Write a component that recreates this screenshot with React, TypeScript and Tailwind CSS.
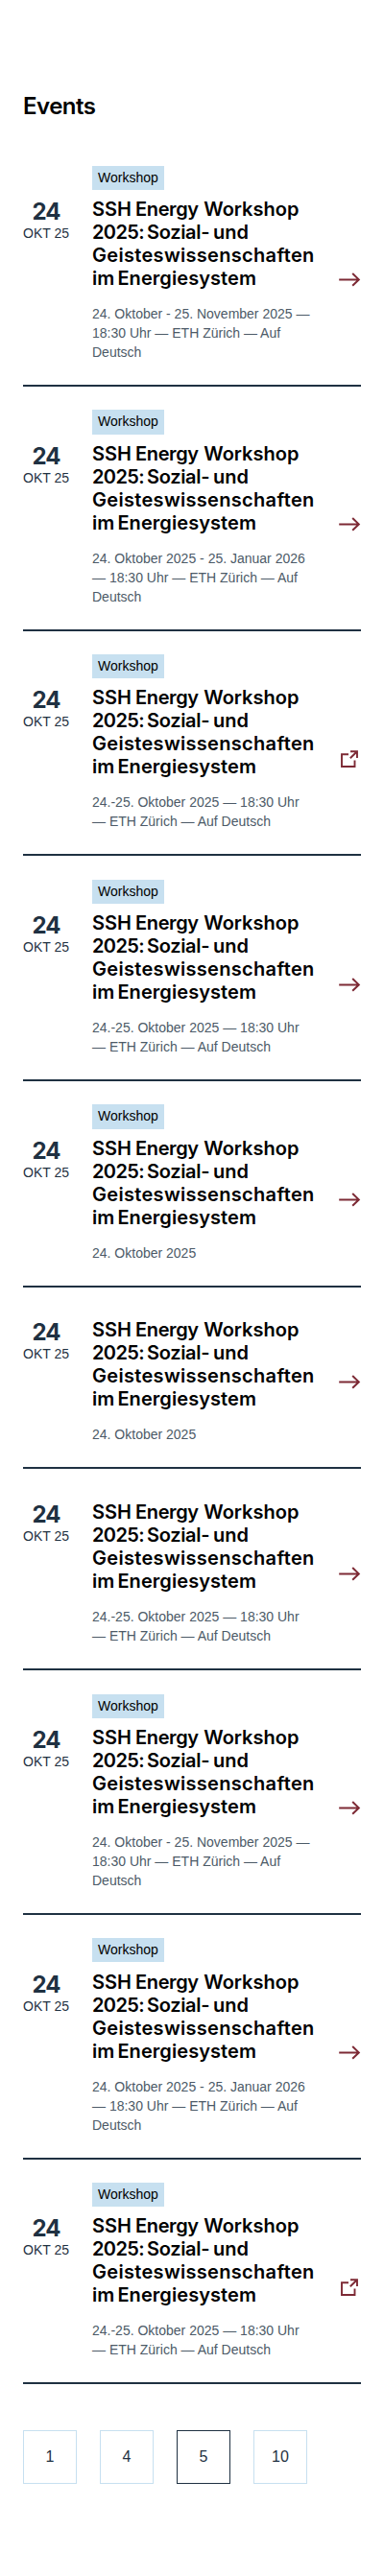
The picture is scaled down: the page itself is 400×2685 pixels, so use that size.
const TITLE_LINES = [
  [
    { word: 'SSH', className: '' },
    { word: 'Energy', className: '-ml-[0.9px] tracking-[-0.4px]' },
    { word: 'Workshop', className: 'ml-[0.6px]' },
  ],
  [
    { word: '2025:', className: 'tracking-[-0.6px]' },
    { word: 'Sozial-', className: '-ml-[2.2px] tracking-[-0.3px]' },
    { word: 'und', className: '-ml-[1.3px]' },
  ],
  [{ word: 'Geisteswissenschaften', className: 'tracking-[0.31px]' }],
  [
    { word: 'im', className: '' },
    { word: 'Energiesystem', className: '-ml-[1.9px] tracking-[0.07px]' },
  ],
];

type EventItem = { tag?: string; meta: string[]; external?: boolean };

const LONG = ['24. Oktober - 25. November 2025 —', '18:30 Uhr — ETH Zürich — Auf', 'Deutsch'];
const LONG_NEXT_YEAR = ['24. Oktober 2025 - 25. Januar 2026', '— 18:30 Uhr — ETH Zürich — Auf', 'Deutsch'];
const SHORT = ['24.-25. Oktober 2025 — 18:30 Uhr', '— ETH Zürich — Auf Deutsch'];
const DAY = ['24. Oktober 2025'];

const EVENTS: EventItem[] = [
  { tag: 'Workshop', meta: LONG },
  { tag: 'Workshop', meta: LONG_NEXT_YEAR },
  { tag: 'Workshop', meta: SHORT, external: true },
  { tag: 'Workshop', meta: SHORT },
  { tag: 'Workshop', meta: DAY },
  { meta: DAY },
  { meta: SHORT },
  { tag: 'Workshop', meta: LONG },
  { tag: 'Workshop', meta: LONG_NEXT_YEAR },
  { tag: 'Workshop', meta: SHORT, external: true },
];

const PAGES = [{ n: 1 }, { n: 4 }, { n: 5, active: true }, { n: 10 }];

function ArrowIcon() {
  return (
    <svg className="size-6 shrink-0" viewBox="0 0 24 24" fill="none" stroke="#7d2a35" strokeWidth="2">
      <path d="M1.2 12.4H22.2M15.2 6L21.8 12.4L15.2 18.8" />
    </svg>
  );
}

function ExternalIcon() {
  return (
    <svg className="size-6 shrink-0" viewBox="0 0 24 24" fill="none" stroke="#7d2a35" strokeWidth="1.9">
      <path d="M11 7.2H4V20H17.5V13.5M13 4.2H20V11M20 4.2L12.8 11.2" />
    </svg>
  );
}

function EventRow({ tag, meta, external }: EventItem) {
  return (
    <li className="border-b-2 border-[#1f3142] pt-[24.3px] pb-6">
      {tag ? (
        <div className="mb-[8.1px] flex pl-[72px]">
          <span className="bg-[#c7e0f0] px-1.5 py-1 text-sm leading-[17.3px] text-black">{tag}</span>
        </div>
      ) : (
        <div className="h-[8.45px]" />
      )}
      <div className="flex items-center gap-6">
        <div className="w-12 shrink-0 self-start text-center text-[#1f3142]">
          <div className="pt-[3px] font-[Inter] text-2xl font-bold leading-6 tracking-[-1px]">24</div>
          <div className="whitespace-nowrap text-sm leading-5">OKT 25</div>
        </div>
        <div className="w-[232px] shrink-0 whitespace-nowrap">
          <h3 className="font-[Inter] text-xl font-semibold leading-6 text-black">
            {TITLE_LINES.map((line, i) => (
              <span key={i} className="block">
                {line.map(({ word, className }, j) => (
                  <span key={word}>
                    {j > 0 && ' '}
                    <span className={className}>{word}</span>
                  </span>
                ))}
              </span>
            ))}
          </h3>
          <p className="mt-[15px] text-sm leading-5 text-[#4c5a67]">
            {meta.map((line) => (
              <span key={line} className="block">{line}</span>
            ))}
          </p>
        </div>
        {external ? <ExternalIcon /> : <ArrowIcon />}
      </div>
    </li>
  );
}

export default function App() {
  return (
    <main className="h-[2685px] bg-white px-6 pt-24 font-['Liberation_Sans',sans-serif]">
      <h2 className="font-[Inter] text-2xl font-semibold leading-[29.3px] tracking-[-0.5px] text-black">Events</h2>
      <ul className="mt-[23px]">
        {EVENTS.map((event, i) => (
          <EventRow key={i} {...event} />
        ))}
      </ul>
      <nav className="mt-12 flex gap-6">
        {PAGES.map(({ n, active }) => (
          <a
            key={n}
            className={
              active
                ? 'flex size-14 items-center justify-center border border-[#1f3142] text-base text-[#1f3142]'
                : 'flex size-14 items-center justify-center border border-[#c7e0f0] text-base text-[#1f3142]'
            }
          >
            {n}
          </a>
        ))}
      </nav>
    </main>
  );
}
